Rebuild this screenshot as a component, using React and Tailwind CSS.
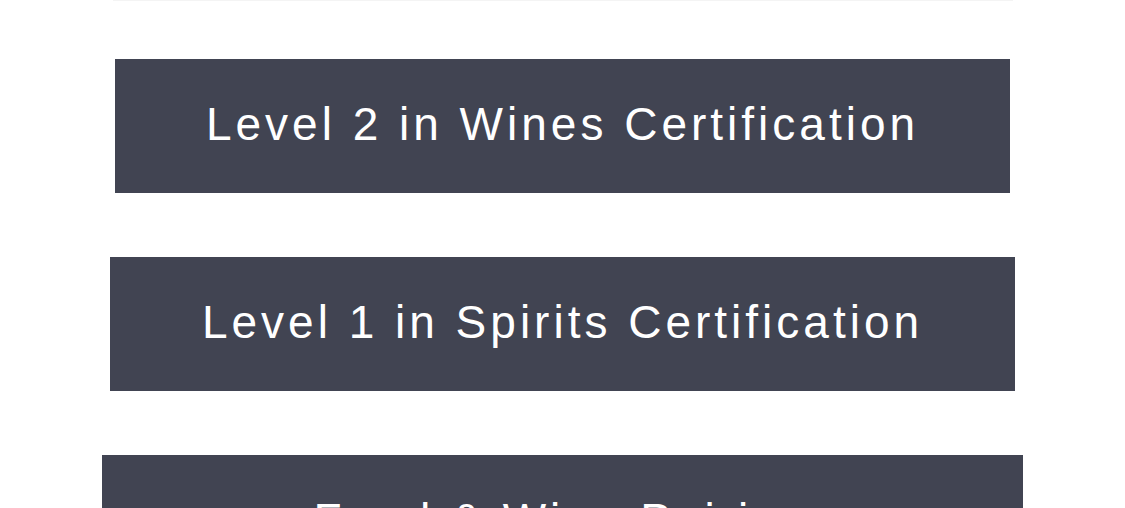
const courses = [
  { title: "Level 2 in Wines Certification", width: "w-[895px]" },
  { title: "Level 1 in Spirits Certification", width: "w-[905px]" },
  { title: "Food & Wine Pairing", width: "w-[921px]" },
];

export default function App() {
  return (
    <div className="h-[508px] overflow-hidden bg-white">
      {/* edge of the card above */}
      <div className="mx-auto h-px w-[900px] bg-[#f4f4f4]" />
      <main className="flex flex-col items-center gap-[64px] pt-[58px]">
        {courses.map((course) => (
          <a
            key={course.title}
            href="#"
            className={`${course.width} flex h-[134px] shrink-0 items-center justify-center bg-[#414452] pb-[4px] font-['Liberation_Sans',Arial,sans-serif] text-[46px] leading-none tracking-[4px] text-white`}
          >
            {course.title}
          </a>
        ))}
      </main>
    </div>
  );
}
